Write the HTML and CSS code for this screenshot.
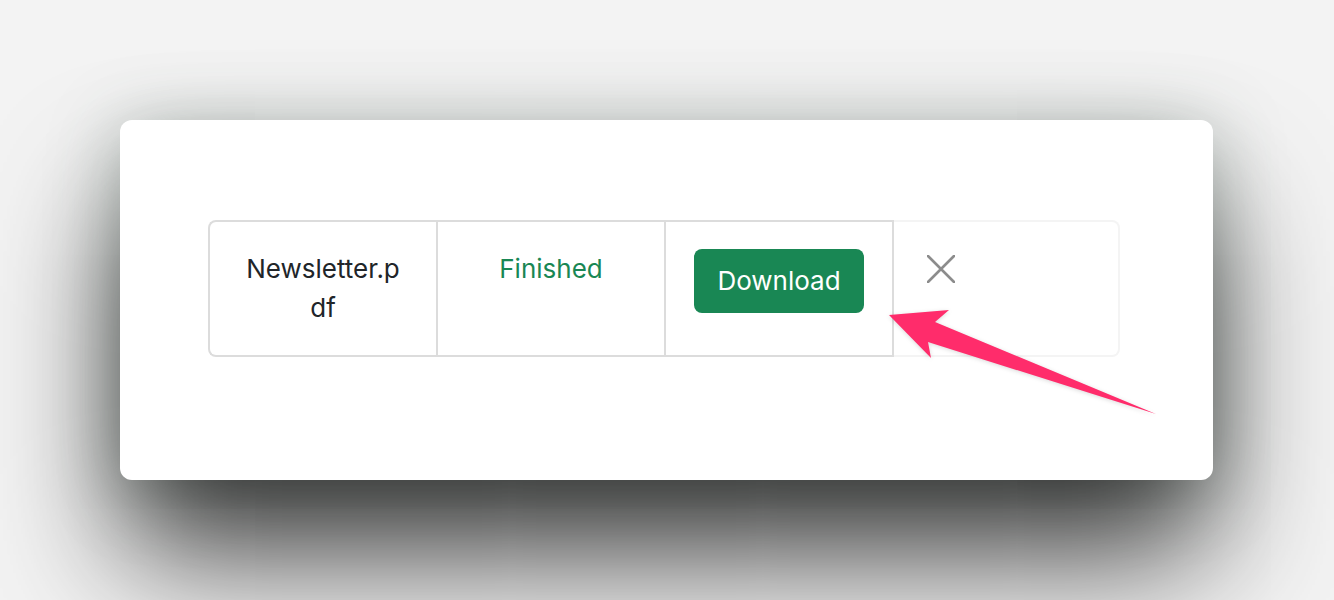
FILE: index.html
```html
<!DOCTYPE html>
<html lang="en">

<head>
  <meta charset="UTF-8">
  <meta name="viewport" content="width=device-width, initial-scale=1.0">
  <title>Download ready</title>
  <link rel="stylesheet" href="styles.css">
</head>

<body>

  <div class="card">
    <!-- file row -->
    <div class="file-row">
      <div class="cell cell-name">Newsletter.pdf</div>
      <div class="cell cell-status">Finished</div>
      <div class="cell cell-action">
        <button class="btn-download">Download</button>
      </div>
      <div class="cell cell-close">
        <button class="btn-close" aria-label="Close">
          <svg width="28" height="28" viewBox="0 0 28 28">
            <path d="M1 1 L27 27 M27 1 L1 27" stroke="#8c8c8c" stroke-width="2.6" stroke-linecap="round" fill="none" />
          </svg>
        </button>
      </div>
    </div>

    <!-- annotation arrow -->
    <svg class="arrow" width="1093" height="360">
      <polygon points="769,195 829,190 815,202 1036,294 808,222 811,238" fill="#ff2c6b" />
    </svg>
  </div>

</body>

</html>
```

FILE: styles.css
```css
body {
  margin: 0;
  height: 600px;
  padding: 120px 121px 0 120px;
  box-sizing: border-box;
  overflow: hidden;
  background: #f3f3f3;
  font-family: Inter, "Noto Sans", Arial, sans-serif;
  color: #212529;
}

.card {
  position: relative;
  height: 360px;
  padding: 100px 88px 0 88px;
  box-sizing: border-box;
  background: #fff;
  border-radius: 12px;
  box-shadow: 0 80px 130px -5px rgba(0, 0, 0, 0.75), 0 10px 70px rgba(60, 85, 72, 0.35);
}

.file-row {
  display: flex;
  width: 912px;
}

.cell {
  box-sizing: border-box;
  width: 228px;
  padding: 27px 27px 28px;
  font-size: 26px;
  line-height: 39px;
  text-align: center;
  border: 2px solid #dcdcdc;
  border-right: none;
  word-break: break-all;
}

.cell-name {
  padding-left: 30px;
  padding-right: 30px;
  border-radius: 8px 0 0 8px;
}

.cell-status {
  color: #198754;
}

.cell-action {
  width: 230px;
  border-right: 2px solid #dcdcdc;
}

.cell-close {
  width: 226px;
  padding: 27px 0;
  text-align: left;
  border: 2px solid #f4f4f4;
  border-left: none;
  border-radius: 0 8px 8px 0;
}

.btn-download {
  display: block;
  margin: 0 auto;
  padding: 12px 23px;
  font-family: inherit;
  font-size: 26px;
  line-height: 40px;
  color: #fff;
  background: #198754;
  border: none;
  border-radius: 8px;
  cursor: pointer;
}

.btn-close {
  display: block;
  margin: 6px 0 0 33px;
  padding: 0;
  width: 28px;
  height: 28px;
  background: none;
  border: none;
  cursor: pointer;
}

.arrow {
  position: absolute;
  left: 0;
  top: 0;
  pointer-events: none;
  filter: drop-shadow(0 1px 2px rgba(0, 0, 0, 0.15));
}
```
